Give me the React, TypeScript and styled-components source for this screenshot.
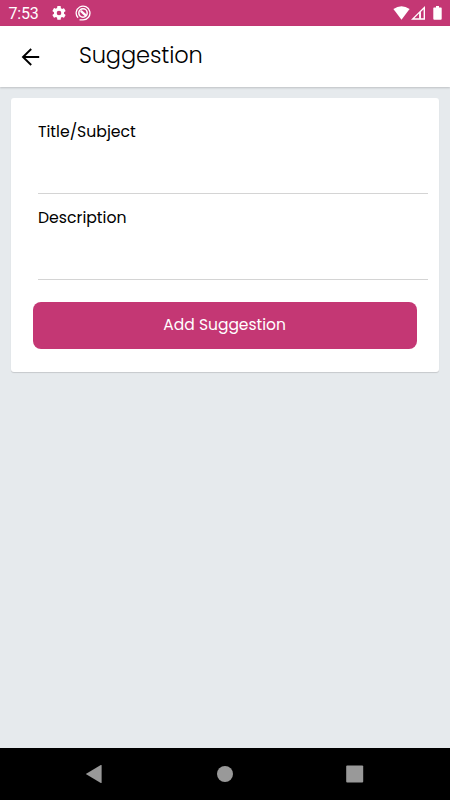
import React from "react";
import styled, { createGlobalStyle } from "styled-components";

const GlobalStyle = createGlobalStyle`
  *, *::before, *::after { box-sizing: border-box; }
  body { margin: 0; }
`;

const Screen = styled.div`
  display: flex;
  flex-direction: column;
  width: 450px;
  height: 800px;
  overflow: hidden;
  background: #e6eaed;
  color: #000;
  font-family: Poppins, Inter, sans-serif;
`;

const StatusBar = styled.header`
  display: flex;
  align-items: center;
  flex: none;
  height: 26px;
  padding: 0 8px 0 8.5px;
  background: #c43774;
  color: #fff;
`;

const Clock = styled.span`
  width: 43px;
  font: 400 16px/26px Roboto, sans-serif;
  letter-spacing: -0.2px;
  padding-top: 2px;
`;

const StatusIcon = styled.svg<{ $gap?: number }>`
  display: block;
  flex: none;
  margin-left: ${({ $gap = 0 }) => $gap}px;
`;

const Spacer = styled.div`
  flex: 1;
`;

const AppBar = styled.div`
  display: flex;
  align-items: center;
  flex: none;
  height: 61px;
  padding-left: 19px;
  background: #fff;
  box-shadow: 0 1px 2px rgba(0, 0, 0, 0.18);
`;

const BackButton = styled.button`
  display: flex;
  width: 24px;
  height: 24px;
  padding: 0;
  border: 0;
  background: none;
`;

const Title = styled.h1`
  margin: 0 0 4px 36px;
  font-size: 22.5px;
  font-weight: 300;
  line-height: 32px;
  letter-spacing: -0.12px;
`;

const Content = styled.main`
  flex: 1;
  padding: 11px;
`;

const Card = styled.form`
  height: 274px;
  padding: 22px 11px 22px 22px;
  border-radius: 3px;
  background: #fff;
  box-shadow: 0 1px 1px rgba(0, 0, 0, 0.14);
`;

const Field = styled.div`
  height: 86px;
  padding-left: 5px;
`;

const Label = styled.label`
  display: block;
  height: 22px;
  font-size: 15.7px;
  line-height: 24px;
`;

const Input = styled.input`
  display: block;
  width: 390px;
  height: 52px;
  padding: 0;
  border: 0;
  border-bottom: 1px solid #d4d4d4;
  outline: 0;
  background: transparent;
  font: inherit;
`;

const SubmitButton = styled.button`
  display: block;
  width: 384px;
  height: 47px;
  margin: 10px 0 0 -0.4px;
  padding: 0 0 3px;
  border: 0;
  border-radius: 8px;
  background: #c43774;
  color: #fff;
  font: inherit;
  font-size: 15.5px;
`;

const NavBar = styled.nav`
  display: flex;
  align-items: center;
  justify-content: space-between;
  flex: none;
  height: 52px;
  padding: 0 86px 0 85px;
  background: #000;
`;

const NavIcon = styled.svg`
  display: block;
  width: 18px;
  height: 20px;
  fill: #999;
`;

export default function App() {
  return (
    <>
      <GlobalStyle />
      <Screen>
        <StatusBar>
          <Clock>7:53</Clock>
          <StatusIcon width="14" height="14" viewBox="2 2 20 20" fill="#fff">
            <path d="M19.14 12.94c.04-.3.06-.61.06-.94s-.02-.64-.07-.94l2.03-1.58a.5.5 0 0 0 .12-.61l-1.92-3.32a.49.49 0 0 0-.59-.22l-2.39.96a7 7 0 0 0-1.62-.94l-.36-2.54A.48.48 0 0 0 13.92 2h-3.84a.48.48 0 0 0-.48.41l-.36 2.54c-.59.24-1.13.57-1.62.94l-2.39-.96a.48.48 0 0 0-.59.22L2.72 8.87a.48.48 0 0 0 .12.61l2.03 1.58c-.05.3-.07.62-.07.94s.02.64.07.94l-2.03 1.58a.5.5 0 0 0-.12.61l1.92 3.32c.12.22.37.29.59.22l2.39-.96c.5.38 1.03.7 1.62.94l.36 2.54c.05.24.24.41.48.41h3.84c.24 0 .44-.17.47-.41l.36-2.54a7 7 0 0 0 1.62-.94l2.39.96c.22.08.47 0 .59-.22l1.92-3.32a.48.48 0 0 0-.12-.61zM12 15.3a3.3 3.3 0 1 1 0-6.6 3.3 3.3 0 0 1 0 6.6z" />
          </StatusIcon>
          <StatusIcon $gap={9.5} width="16" height="16" viewBox="0 0 16 16" fill="none" stroke="#fff">
            <path d="M3.1 12.8A6.9 6.9 0 1 1 8 14.9H4.5" strokeWidth="1.3" />
            <circle cx="8" cy="8" r="4.2" strokeWidth="1.5" />
            <path d="M5.8 5.8l5.2 4.8" strokeWidth="2.4" />
          </StatusIcon>
          <Spacer />
          <StatusIcon width="17" height="14" viewBox="0 0 17 14" fill="#fff">
            <path d="M8.5 13.7L.4 3.1Q8.5-2.4 16.6 3.1z" />
          </StatusIcon>
          <StatusIcon $gap={1} width="15" height="14" viewBox="0 0 15 14">
            <path fill="#fff" fillRule="evenodd" d="M0 13.7L14 0v13.7zM3.4 12.3H8.3V7.2zM9.8 12.3h2.8V3.2L9.8 6z" />
            <path d="M8.3 7.2l1.5-1.2v6.3H8.3z" fill="#fff" />
          </StatusIcon>
          <StatusIcon $gap={7} width="9" height="14" viewBox="0 0 9 14" fill="#fff">
            <path d="M1 1.5h2V0h3v1.5h2q.7 0 .7.7v10.6q0 1-.9 1H1.2q-.9 0-.9-1V2.2q0-.7.7-.7z" />
          </StatusIcon>
        </StatusBar>
        <AppBar>
          <BackButton type="button" aria-label="Back">
            <svg width="24" height="24" viewBox="0 0 24 24" fill="none" stroke="#000" strokeWidth="1.9">
              <path d="M20.2 12H4.2M12.2 4L4 12l8.2 8" />
            </svg>
          </BackButton>
          <Title>Suggestion</Title>
        </AppBar>
        <Content>
          <Card>
            <Field>
              <Label htmlFor="subject">Title/Subject</Label>
              <Input id="subject" />
            </Field>
            <Field>
              <Label htmlFor="description">Description</Label>
              <Input id="description" />
            </Field>
            <SubmitButton type="button">Add Suggestion</SubmitButton>
          </Card>
        </Content>
        <NavBar>
          <NavIcon viewBox="0 0 18 20"><path d="M.8 10L15.8 1q.8-.4.8.5v17q0 .9-.8.5z" /></NavIcon>
          <NavIcon viewBox="0 0 18 20"><circle cx="9" cy="10" r="8" /></NavIcon>
          <NavIcon viewBox="0 0 18 20"><rect x=".2" y="1.4" width="17" height="17" rx="1" /></NavIcon>
        </NavBar>
      </Screen>
    </>
  );
}
